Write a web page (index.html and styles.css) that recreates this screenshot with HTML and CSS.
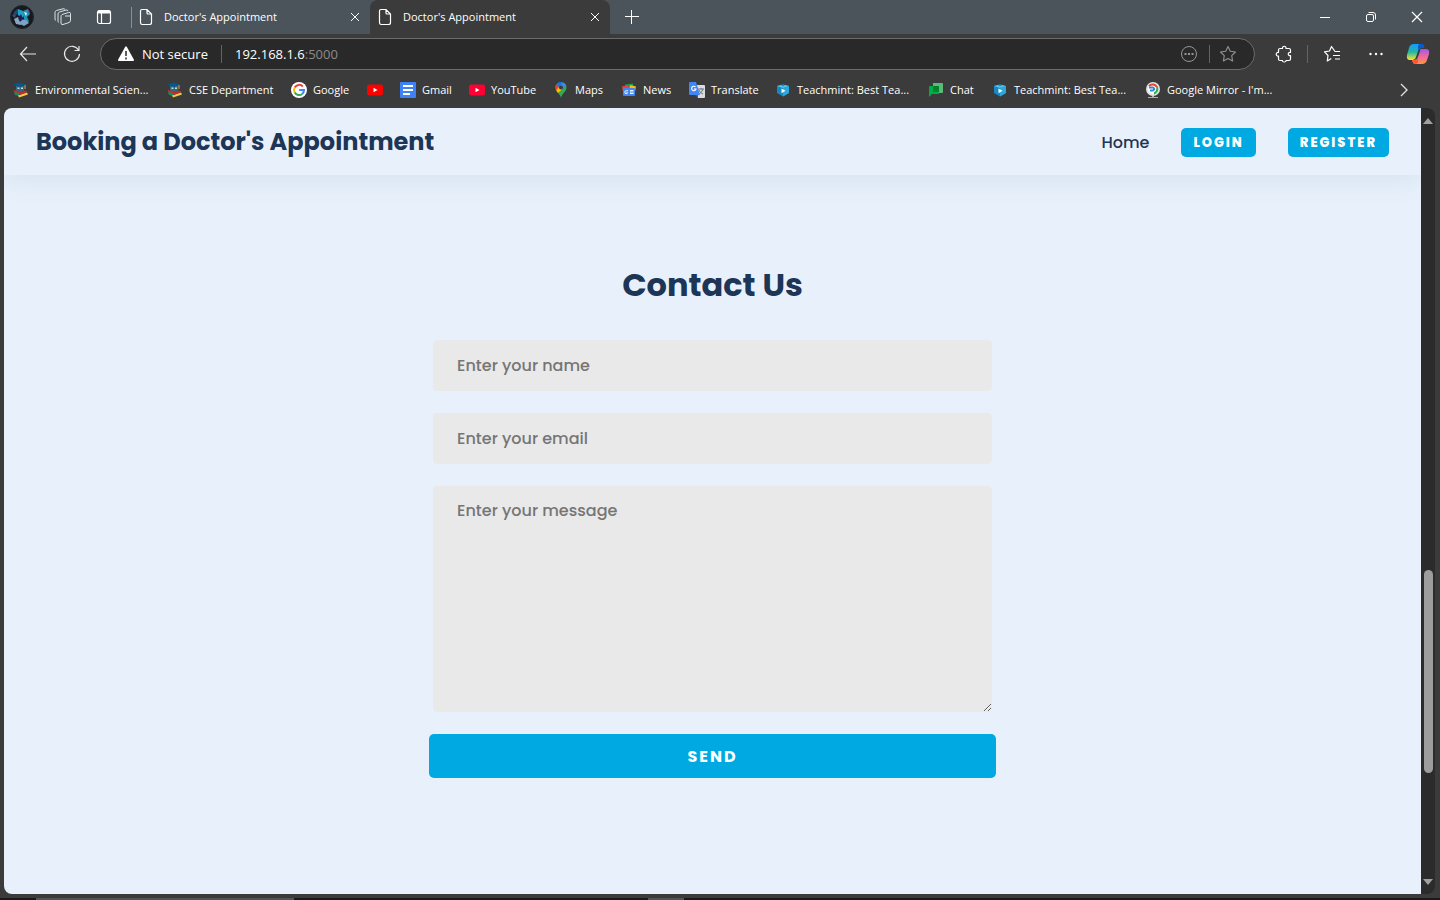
FILE: index.html
```html
<!DOCTYPE html>
<html lang="en">
<head>
<meta charset="utf-8">
<meta name="viewport" content="width=device-width, initial-scale=1">
<title>Doctor's Appointment</title>
<link rel="stylesheet" href="styles.css">
</head>
<body>
<svg class="symbols" aria-hidden="true">
  <symbol id="page" viewBox="0 0 14 18"><path d="M3 1.500h5l4.500 4.500v8.500a2 2 0 0 1-2 2H3a2 2 0 0 1-1.500-2V3A1.500 1.500 0 0 1 3 1.500zM8 1.500V5a1 1 0 0 0 1 1h3.500" fill="none" stroke="currentColor" stroke-width="1.200"/></symbol>
  <symbol id="cross" viewBox="0 0 10 10"><path d="M1 1l8 8M9 1L1 9" fill="none" stroke="currentColor" stroke-width="1"/></symbol>
  <symbol id="scholar" viewBox="0 0 16 16"><path d="M3 4h8v4.500q-4 3-8 0z" fill="#35677f"/><path d="M0 2.500L6 .5l7 2-6 2.500z" fill="#07568c"/><path d="M12 3v4" stroke="#d7a642"/><path d="M4.500 5.500h2V7h-2zM8 5.500h2V7H8z" fill="#c6d9d9"/><path d="M1 8l4 1 3 2-2 2-5-3z" fill="#d52330"/><path d="M1 10l5 1v3l-4-1z" fill="#168f53"/><path d="M5 13.500l9-3 1 2-9 3z" fill="#f1c84b"/><path d="M6 11l6-2.500 2.500 1L7 13z" fill="#cf2932"/></symbol>
  <symbol id="teach" viewBox="0 0 16 16"><path d="M2 4l4-1 2-1 2 1 4 1v7l-6 3.500L2 11z" fill="#1689c4"/><path d="M2 4l6 2 6-2-4-1-2 1.500L6 3z" fill="#57c5ee"/><path d="M8 6v8.500l6-3.500V4z" fill="#2ba9dc"/><path d="M6.500 6.500l4 2.300-4 2.400z" fill="#fff"/></symbol>
  <symbol id="youtube" viewBox="0 0 16 16"><rect y="2.500" width="16" height="11" rx="2.500" fill="currentColor"/><path d="M6.500 5.700v4.600l4-2.300z" fill="#fff"/></symbol>
</svg>

<header class="browser">
  <div class="tabstrip">
    <div class="tabtools">
      <button class="icon-btn" aria-label="Profile"><svg width="26" height="26" viewBox="0 0 26 26"><circle cx="13" cy="13" r="11.500" fill="#18191e" stroke="#22262b"/><path d="M5 8l3-3 3 1 2 3-2 2-3-1-2 4-2-1z" fill="#164d74"/><path d="M9 5l5 2 2 4-3 3-4-3z" fill="#1ea2c8"/><path d="M14 7l5-2 2 5-3 3 2 4-3 3-2-5z" fill="#1f93b4"/><path d="M5 15l4-2 3 3v5l-5-1z" fill="#8aa5c0"/><path d="M11 15l6 1 3 3-5 3-4-2z" fill="#7ba3c4"/><path d="M15 8l3 1-1 3z" fill="#f0f4f4"/><path d="M3 11l3-1-1 3zM19 5l2 3-1 2z" fill="#7b2c70"/><path d="M12 10l2 5-3 3-2-4z" fill="#2a1958"/></svg></button>
      <button class="icon-btn" aria-label="Workspaces"><svg width="18" height="18" viewBox="0 0 18 18" fill="none" stroke="#dfe2e3" stroke-width="1" stroke-linejoin="round"><path d="M8 6.500q-1 .5-1 2V15q0 2 2 1.500l6-2q1.500-.5 1.500-2V5.500q0-1.500-2-1zM11 8h5M4.500 14.500Q4 14 4 13V6q0-1.500 1.500-2L12 2q1.500-.5 2 1M2 12.500Q1 12 1 11V4.500Q1 3 2.500 2.500L9 .8q1.500-.3 2 .7"/></svg></button>
      <button class="icon-btn" aria-label="Tab actions"><svg width="16" height="16" viewBox="0 0 16 16" fill="none" stroke="#fff" stroke-width="1.200"><rect x="1.500" y="1.500" width="13" height="13" rx="2"/><path d="M2 3h12" stroke-width="3"/><path d="M5.500 4v10"/></svg></button>
    </div>
    <div class="tab first"><svg class="page"><use href="#page"/></svg><span>Doctor's Appointment</span><button aria-label="Close tab"><svg width="10" height="10"><use href="#cross"/></svg></button></div>
    <div class="tab active"><svg class="page"><use href="#page"/></svg><span>Doctor's Appointment</span><button aria-label="Close tab"><svg width="10" height="10"><use href="#cross"/></svg></button></div>
    <button class="new-tab" aria-label="New tab"><svg width="14" height="14" viewBox="0 0 14 14" stroke="#fff"><path d="M6.500 0v14M0 6.500h14"/></svg></button>
    <div class="window-controls">
      <button aria-label="Minimize"><svg width="12" height="12" viewBox="0 0 12 12" stroke="#fff"><path d="M1 6.500h10"/></svg></button>
      <button aria-label="Restore"><svg width="12" height="12" viewBox="0 0 12 12" fill="none" stroke="#fff"><rect x="1.500" y="3.500" width="7" height="7" rx="1.500"/><path d="M3.500 1.500H8q2.500 0 2.500 2.500v4.500"/></svg></button>
      <button aria-label="Close"><svg width="12" height="12" viewBox="0 0 12 12" stroke="#fff" stroke-width="1.200"><path d="M1 1l10 10M11 1L1 11"/></svg></button>
    </div>
  </div>

  <div class="toolbar">
    <button class="nav-btn" aria-label="Back"><svg width="18" height="16" viewBox="0 0 18 16" fill="none" stroke="#e8e8e8" stroke-width="1.200"><path d="M8 1L1.500 8 8 15M1.500 8H17"/></svg></button>
    <button class="nav-btn" aria-label="Refresh"><svg width="18" height="18" viewBox="0 0 18 18" fill="none" stroke="#e8e8e8" stroke-width="1.200"><path d="M15.500 5A7.500 7.500 0 1 0 16.500 9M16 1v4.500h-4.500"/></svg></button>
    <div class="address">
      <svg width="18" height="16" viewBox="0 0 18 16"><path d="M8 1.200q1-1.700 2 0l6.700 12q.8 1.800-1 1.800H2.300q-1.800 0-1-1.800z" fill="#fff"/><path d="M9 5v5M9 11.500v2" stroke="#292929" stroke-width="1.500"/></svg>
      <span class="secure">Not secure</span><span class="rule"></span>
      <span class="url">192.168.1.6<span>:5000</span></span>
      <button class="address-btn" aria-label="Page options"><svg width="18" height="18" viewBox="0 0 18 18" fill="none" stroke="#969696"><circle cx="9" cy="9" r="7.500"/><path d="M4.500 9h2M8 9h2M11.500 9h2" stroke-width="2"/></svg></button>
      <span class="rule"></span>
      <button class="address-btn" aria-label="Add favorite"><svg width="18" height="18" viewBox="0 0 18 18" fill="none" stroke="#929292" stroke-width="1.100" stroke-linejoin="round"><path d="M9 1.500l2.300 4.800 5.200.7-3.800 3.700.9 5.300L9 13.500 4.400 16l.9-5.300L1.500 7l5.200-.7z"/></svg></button>
    </div>
    <div class="actions">
      <button aria-label="Extensions"><svg width="18" height="18" viewBox="0 0 18 18" fill="none" stroke="#fff" stroke-width="1.200" stroke-linejoin="round"><path d="M5 3.500h2.500c-.5-3 4-3 3.500 0h3q1.500 0 1.500 1.500v2.500c-3-.5-3 3.500 0 3V14q0 1.500-1.500 1.500h-3c.5 2-4 2-3.500 0H5q-1.500 0-1.500-1.500v-3c-3 .5-3-4 0-3.500V5q0-1.500 1.500-1.500z"/></svg></button>
      <span class="rule"></span>
      <button aria-label="Favorites"><svg width="18" height="18" viewBox="0 0 18 18" fill="none" stroke="#fff" stroke-width="1.200" stroke-linejoin="round"><path d="M17 6.500h-5L8.500 1.500 6.500 6l-5 .8L5 10.500 4.300 16l4-2.500M10 10.500h7M12 14h5"/></svg></button>
      <button aria-label="More"><svg width="18" height="18" viewBox="0 0 18 18" fill="#fff"><circle cx="3.500" cy="9" r="1.200"/><circle cx="9" cy="9" r="1.200"/><circle cx="14.500" cy="9" r="1.200"/></svg></button>
      <button aria-label="Copilot"><svg width="24" height="22" viewBox="0 0 24 22"><defs><linearGradient id="cool" x2="0" y2="1"><stop stop-color="#159bff"/><stop offset=".5" stop-color="#22b6a2"/><stop offset="1" stop-color="#ffe42c"/></linearGradient><linearGradient id="warm" x2="0" y2="1"><stop stop-color="#a755e6"/><stop offset=".5" stop-color="#ed69a0"/><stop offset="1" stop-color="#ff943f"/></linearGradient></defs><path d="M8 1h7q2 0 3 4h-3q-2 0-3 3l-2 6q-1 3-4 3H4q-4 0-3-5l2-7q1-4 5-4z" fill="url(#cool)"/><path d="M14 1h2q2 0 2.500 4H15q-2 0-3 3V4q0-3 2-3z" fill="#075bce"/><path d="M15 6h5q4 0 3 5l-2 6q-1 4-5 4H9q-2 0-3-4h2q3 0 4-3l2-6q0-2 1-2z" fill="url(#warm)"/><path d="M6 17h3q2 0 3-3v4q0 3-3 3-2 0-3-4z" fill="#ff582d"/></svg></button>
    </div>
  </div>

  <nav class="bookmarks" aria-label="Bookmarks">
    <a href="#"><svg><use href="#scholar"/></svg><span>Environmental Scien...</span></a>
    <a href="#"><svg><use href="#scholar"/></svg><span>CSE Department</span></a>
    <a href="#"><svg viewBox="0 0 16 16"><circle cx="8" cy="8" r="8" fill="#fff"/><g fill="none" stroke-width="2"><path d="M11.800 4.500A5 5 0 0 0 3.700 5.500" stroke="#e94235"/><path d="M3.700 5.500a5 5 0 0 0 0 5" stroke="#fbbc05"/><path d="M3.700 10.500a5 5 0 0 0 7.500 1.500" stroke="#34a853"/><path d="M11.200 12Q13 10.500 13 8H8.200" stroke="#4285f4"/></g></svg><span>Google</span></a>
    <a href="#" aria-label="YouTube"><svg class="red"><use href="#youtube"/></svg></a>
    <a href="#"><svg viewBox="0 0 16 16"><rect width="16" height="16" rx="1" fill="#3e82f7"/><path d="M3 4h10M3 8h10M3 12h7" stroke="#fff" stroke-width="2"/></svg><span>Gmail</span></a>
    <a href="#"><svg class="pink"><use href="#youtube"/></svg><span>YouTube</span></a>
    <a href="#"><svg viewBox="0 0 16 16"><path d="M8 0a5.500 5.500 0 0 1 5.500 5.500C13.500 10 9 11 8 16 7 11 2.500 10 2.500 5.500A5.500 5.500 0 0 1 8 0z" fill="#34a853"/><path d="M3.500 2.300L6.300 4.500 3.200 8.200Q1.500 4.500 3.500 2.300" fill="#ea4335"/><path d="M3.500 2.300Q6-.8 9.800.4L6 5z" fill="#1a73e8"/><path d="M3.200 8.200L6 5l3 2.500L5 11z" fill="#fbbc04"/><path d="M9.800.4q2 .6 3 2.700L9.500 7 8 4z" fill="#4285f4"/><circle cx="8" cy="5.500" r="2" fill="#3b3b3b"/></svg><span>Maps</span></a>
    <a href="#"><svg viewBox="0 0 16 16"><path d="M4 2.500l8-1 1 5H4z" fill="#0c9d58"/><path d="M1 4.500l6-1.500 2 4-7 3z" fill="#ea4335"/><path d="M9 3l6 1.500-1 5H8z" fill="#fbbc04"/><rect x="2" y="6" width="12" height="8" rx="1" fill="#4285f4"/><path d="M7 8.700H5.200a1.500 1.500 0 1 0 1.500 2H5.500M9 8.500h3.500M9 10h3.500M9 11.500h3.500" fill="none" stroke="#fff" stroke-width=".9"/></svg><span>News</span></a>
    <a href="#"><svg viewBox="0 0 16 16"><path d="M6 3h9q1 0 1 1v11q0 1-1 1H9z" fill="#dcdcdc"/><path d="M9 7h6M12 6v1M14 7q-.5 3-4 5M10 8q1 3 4 4" fill="none" stroke="#657b83"/><path d="M1 0h6l4 13H1q-1 0-1-1V1q0-1 1-1z" fill="#4285f4"/><path d="M9 13H6l3 3z" fill="#275cc5"/><path d="M6.500 5A2.200 2.200 0 1 0 7 7H4.800" fill="none" stroke="#fff" stroke-width="1.100"/></svg><span>Translate</span></a>
    <a href="#"><svg><use href="#teach"/></svg><span>Teachmint: Best Tea...</span></a>
    <a href="#"><svg viewBox="0 0 16 16"><path d="M5 1h9q1 0 1 1v8q0 1-1 1H5z" fill="#5bbb76"/><path d="M2 4h9v8H4l-3 3V5q0-1 1-1z" fill="#00ac47"/><path d="M5 4h6v6H5z" fill="#00832d"/></svg><span>Chat</span></a>
    <a href="#"><svg><use href="#teach"/></svg><span>Teachmint: Best Tea...</span></a>
    <a href="#"><svg viewBox="0 0 16 16"><circle cx="8" cy="7" r="7" fill="#dfe4e4"/><circle cx="8" cy="7" r="5" fill="#fff"/><g fill="none" stroke-width="2"><path d="M4 4a5 5 0 0 1 8 1" stroke="#e94235"/><path d="M12 5a5 5 0 0 1-3 6.500" stroke="#34a853"/><path d="M4 5.500h4q2.500 1.500 0 3H5" stroke="#3984cc"/></g><path d="M7 14h2v1h4v1H3v-1h4z" fill="#a9aeb0"/></svg><span>Google Mirror - I'm...</span></a>
    <button aria-label="More bookmarks"><svg viewBox="0 0 16 16" fill="none" stroke="#dedede" stroke-width="1.400"><path d="M5 2l6 6-6 6"/></svg></button>
  </nav>
</header>

<div class="viewport">
  <div class="site">
    <header class="site-header">
      <h1>Booking a Doctor's Appointment</h1>
      <nav><a class="home" href="#">Home</a><button class="btn small">LOGIN</button><button class="btn small">REGISTER</button></nav>
    </header>
    <main>
      <h2>Contact Us</h2>
      <form>
        <input type="text" placeholder="Enter your name" aria-label="Name">
        <input type="email" placeholder="Enter your email" aria-label="Email">
        <textarea placeholder="Enter your message" aria-label="Message"></textarea>
        <button class="btn" type="button">SEND</button>
      </form>
    </main>
  </div>
  <div class="scrollbar" aria-hidden="true">
    <svg viewBox="0 0 10 6"><path d="M5 0l5 6H0z"/></svg>
    <div class="track"><div class="thumb"></div></div>
    <svg viewBox="0 0 10 6"><path d="M0 0h10L5 6z"/></svg>
  </div>
</div>
<div class="taskbar" aria-hidden="true"><span class="search"></span><span class="running"></span></div>
</body>
</html>
```
FILE: styles.css
```css
* { box-sizing: border-box; }
body {
  margin: 0;
  height: 100vh;
  display: flex;
  flex-direction: column;
  overflow: hidden;
  background: #3b3b3b;
  color: #fff;
  font-family: "Segoe UI", "Open Sans", "Noto Sans", sans-serif;
  font-size: 12px;
}
button { font: inherit; color: inherit; background: none; border: 0; padding: 0; }
a { color: inherit; text-decoration: none; }
svg { display: block; flex: none; }
.symbols { position: absolute; width: 0; height: 0; }
.browser { flex: none; }
.browser button { display: flex; align-items: center; justify-content: center; }

.tabstrip { display: flex; height: 34px; background: #4b545a; }
.tabtools { display: flex; align-items: center; width: 131px; padding-left: 1px; }
.icon-btn { width: 41px; height: 34px; }
.tab {
  display: flex;
  align-items: center;
  width: 239px;
  padding: 0 10px 0 8px;
  gap: 11px;
  font-size: 11px;
}
.tab.first {
  padding-left: 7px;
  border: 0 solid;
  border-left-width: 1px;
  border-image: linear-gradient(transparent 8px, #899094 8px, #899094 27px, transparent 27px) 1;
}
.tab.active { background: #3b3b3b; border-radius: 8px 8px 0 0; width: 240px; }
.tab span { padding-bottom: 2px; }
.page { width: 14px; height: 18px; }
.tab button { margin-left: auto; width: 10px; height: 16px; }
.new-tab { width: 44px; }
.window-controls { margin-left: auto; display: flex; }
.window-controls button { width: 46px; }

.toolbar { display: flex; align-items: center; height: 40px; padding-left: 6px; }
.nav-btn { width: 44px; height: 32px; }
.address {
  flex: 1;
  display: flex;
  align-items: center;
  height: 32px;
  margin-left: 6px;
  padding: 0 8px 0 16px;
  border: 1px solid #6b6b6b;
  border-radius: 16px;
  background: #292929;
  font-size: 13px;
}
.secure { margin-left: 7px; width: 79px; white-space: nowrap; }
.rule { width: 1px; height: 18px; background: #646464; }
.url { margin: 0 auto 0 13px; }
.url span { color: #8c8c8c; }
.address-btn { width: 40px; height: 30px; }
.address-btn:last-child { width: 36px; }
.address .address-btn + .rule { margin-left: 0; }
.actions { display: flex; align-items: center; width: 185px; padding-left: 7px; }
.actions button { width: 44px; height: 32px; }
.actions .rule { margin: 0 2px 0 1px; }
.actions button:last-child { width: 40px; }

.bookmarks {
  display: grid;
  grid-template-columns: 154px 124px 76px 33px 69px 84px 68px 68px 86px 153px 64px 153px 1fr 16px;
  align-items: center;
  height: 34px;
  padding: 0 28px 2px 13px;
  font-size: 11px;
}
.bookmarks a { display: flex; align-items: center; gap: 6px; white-space: nowrap; }
.bookmarks span { padding-bottom: 2px; }
.bookmarks svg { width: 16px; height: 16px; }
.red { color: #f00; }
.pink { color: #ff0033; }

.viewport { flex: 1; min-height: 0; display: flex; margin: 0 5px 4px 4px; }
.site {
  flex: 1;
  overflow: hidden;
  border-radius: 8px 0 0 8px;
  background: #e8f1fb;
  color: #1d3557;
  font-family: Poppins, Inter, sans-serif;
}
.site-header {
  display: flex;
  align-items: center;
  justify-content: space-between;
  height: 67px;
  padding: 0 32px;
  box-shadow: 0 8px 24px rgba(29, 83, 117, .08);
}
.site h1 { margin: 0; font-size: 24px; font-weight: 700; }
.site nav { display: flex; align-items: center; gap: 32px; padding-top: 2px; }
.home { font-size: 16px; font-weight: 500; }
.btn {
  height: 44px;
  border-radius: 5px;
  background: #00a9e2;
  color: #fff;
  font-size: 16px;
  font-weight: 700;
  letter-spacing: 2px;
}
.btn.small { height: 29px; padding: 0 12px; font-size: 13px; font-weight: 800; }
main { width: 40%; margin: 0 auto; padding-top: 86px; }
h2 { margin: 0 0 31px; text-align: center; font-size: 32px; line-height: 48px; font-weight: 700; }
form { display: flex; flex-direction: column; gap: 22px; }
input, textarea {
  margin: 0 4px;
  height: 51px;
  padding: 0 24px;
  border: 0;
  border-radius: 4px;
  background: #e9e9e9;
  color: #1d3557;
  font: 500 16px Poppins, Inter, sans-serif;
}
textarea { height: 226px; padding-top: 14px; line-height: 22px; resize: both; }
::placeholder { color: #757575; opacity: 1; }

.scrollbar {
  width: 14px;
  display: flex;
  flex-direction: column;
  align-items: center;
  padding: 10px 0 9px;
  border-radius: 0 8px 8px 0;
  background: #2b2b2b;
}
.scrollbar svg { width: 10px; height: 6px; fill: #a0a0a0; }
.track { flex: 1; display: flex; flex-direction: column; width: 9px; }
.track::before { content: ""; flex: 446; }
.track::after { content: ""; flex: 106; }
.thumb { flex: 203; border-radius: 5px; background: #9d9d9d; }
.taskbar { flex: none; display: flex; height: 2px; background: #1d191a; }
.search { width: 258px; margin-left: 36px; background: #555; }
.running { width: 36px; margin-left: 354px; background: #555; }
```
